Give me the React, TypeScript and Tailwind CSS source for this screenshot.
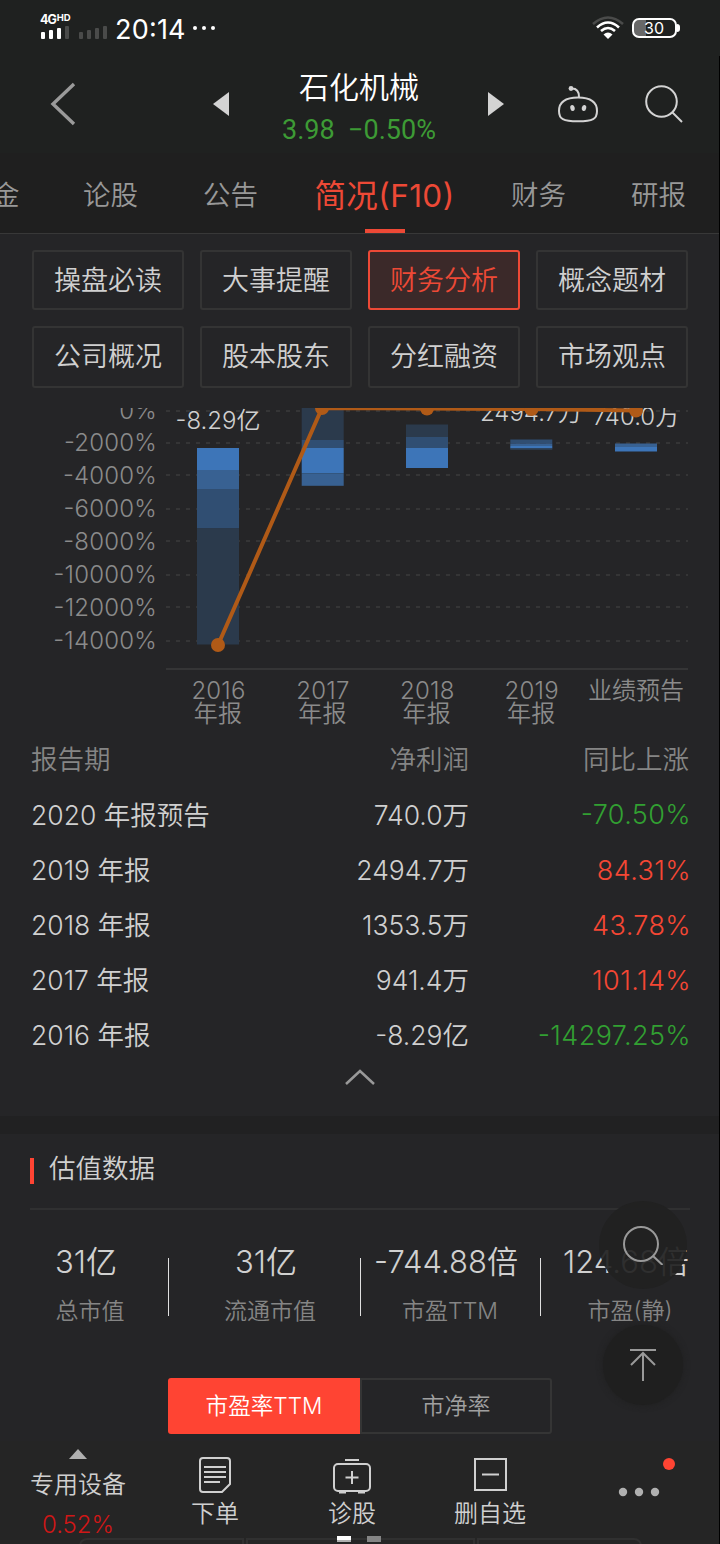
import { clsx } from "clsx"

interface Report {
    period: string
    profit: string
    change: string
}

const tabs = [
    { label: "论股", width: "w-[120px]" },
    { label: "公告", width: "w-[120px]" },
    { label: "简况(F10)", width: "w-[188px]", active: true },
    { label: "财务", width: "w-[120px]" },
    { label: "研报", width: "w-[120px]" },
]

const sections = ["操盘必读", "大事提醒", "财务分析", "概念题材", "公司概况", "股本股东", "分红融资", "市场观点"]

const reports: Report[] = [
    { period: "2020 年报预告", profit: "740.0万", change: "-70.50%" },
    { period: "2019 年报", profit: "2494.7万", change: "84.31%" },
    { period: "2018 年报", profit: "1353.5万", change: "43.78%" },
    { period: "2017 年报", profit: "941.4万", change: "101.14%" },
    { period: "2016 年报", profit: "-8.29亿", change: "-14297.25%" },
]

const stats = [
    { value: "31亿", label: "总市值", box: "w-[168px] pl-3" },
    { value: "31亿", label: "流通市值", box: "w-[192px] pl-3" },
    { value: "-744.88倍", label: "市盈TTM", box: "w-[180px]" },
    { value: "124.68倍", label: "市盈(静)", box: "w-[180px]" },
]

const gridLines = [
    { y: 411, label: "0%" },
    { y: 443, label: "-2000%" },
    { y: 475, label: "-4000%" },
    { y: 509, label: "-6000%" },
    { y: 541, label: "-8000%" },
    { y: 575, label: "-10000%" },
    { y: 607, label: "-12000%" },
    { y: 641, label: "-14000%" },
]

// [x, y, height, color], every bar is 42 wide
const bars: [number, number, number, string][] = [
    [197, 448, 22, "#3d75b8"],
    [197, 470, 19, "#386192"],
    [197, 489, 39.5, "#304e72"],
    [197, 528.5, 116, "#2b3a4c"],
    [301.7, 408, 32, "#2b3a4c"],
    [301.7, 440, 8, "#304e72"],
    [301.7, 448, 25.3, "#3d75b8"],
    [301.7, 473.3, 12.5, "#386192"],
    [406, 424.5, 12.5, "#2b3a4c"],
    [406, 437, 11, "#304e72"],
    [406, 448, 20, "#3d75b8"],
    [510.3, 439.5, 4, "#304e72"],
    [510.3, 443.5, 2.5, "#386192"],
    [510.3, 446, 2.5, "#3d75b8"],
    [510.3, 448.5, 1.5, "#2b3a4c"],
    [615, 443.5, 3.5, "#386192"],
    [615, 447, 4.5, "#3d75b8"],
]

const points = [
    [218, 645],
    [322, 408],
    [427, 408.5],
    [531.5, 409],
    [636, 410.5],
]

function StatusBar() {
    return (
        <div className="flex h-14 items-center pl-10">
            <div className="mt-[-2px] w-[31px]">
                <div className="flex h-[12px] items-start text-[12.5px] leading-[12px] font-bold tracking-[-1px] text-white">
                    4G<span className="ml-px text-[9.5px] leading-[8px] tracking-[-0.3px]">HD</span>
                </div>
                <svg className="mt-[-1px] block h-[15px] w-[31px]" viewBox="0 0 31 15">
                    <rect x="1" y="7" width="4" height="7" rx="1" fill="#fff" />
                    <rect x="9" y="5" width="4" height="9" rx="1" fill="#fff" />
                    <rect x="17" y="3" width="4" height="11" rx="1" fill="#fff" />
                    <rect x="25" y="1" width="4" height="13" rx="1" fill="#4a4b4a" />
                </svg>
            </div>
            <svg className="mt-[7px] ml-[7px] h-[15px] w-[31px]" viewBox="0 0 31 15">
                <rect x="1" y="8" width="4" height="7" rx="1" fill="#4a4b4a" />
                <rect x="9" y="6" width="4" height="9" rx="1" fill="#4a4b4a" />
                <rect x="17" y="4" width="4" height="11" rx="1" fill="#4a4b4a" />
                <rect x="25" y="2" width="4" height="13" rx="1" fill="#4a4b4a" />
            </svg>
            <span className="mt-1 ml-[6px] w-[70px] text-[27px] leading-8 font-normal tracking-[0.2px] whitespace-nowrap text-white">20:14</span>
            <svg className="ml-[6px] h-1 w-6" viewBox="0 0 24 4">
                <circle cx="4" cy="2" r="2" fill="#fff" />
                <circle cx="13" cy="2" r="2" fill="#fff" />
                <circle cx="22" cy="2" r="2" fill="#fff" />
            </svg>
            <svg className="ml-auto h-6 w-8" viewBox="0 0 32 24" fill="none" strokeWidth="2.6">
                <path d="M1 8Q16-5 31 8" stroke="#4a4b4a" />
                <path d="M5 11.500Q16 1.500 27 11.500" stroke="#fff" />
                <path d="M9 15Q16 9 23 15" stroke="#fff" />
                <path d="M11.500 18.500Q16 14.500 20.500 18.500L16 23Z" fill="#fff" />
            </svg>
            <div className="ml-2 flex h-5 w-[45px] items-center justify-center rounded-[7px] border-2 border-white bg-linear-to-r from-[#686868] from-30% to-transparent to-30% pr-px text-[16px] leading-4 font-normal text-white">
                30
            </div>
            <div className="mr-10 h-2 w-[3px] rounded-r bg-white" />
        </div>
    )
}

function Header() {
    return (
        <div className="flex h-[97px] items-center text-[#d3d3d3]">
            <svg className="mt-[-2px] ml-[50px] h-11 w-[26px] text-[#9a9a9a]" viewBox="0 0 26 44" fill="none" stroke="currentColor" strokeWidth="3.4">
                <path d="M24 2L3 22L24 42" />
            </svg>
            <svg className="mt-[-2px] ml-[137px] h-6 w-4" viewBox="0 0 16 24" fill="currentColor">
                <path d="M16 0V24L0 12Z" />
            </svg>
            <div className="ml-[53px] flex w-[154px] flex-col items-center pt-2">
                <div className="text-[30px] leading-[42px] text-white">石化机械</div>
                <div className="font-[Roboto] text-[27px] leading-[44px] font-normal whitespace-pre text-[#3d9b35]">3.98  −0.50%</div>
            </div>
            <svg className="mt-[-2px] ml-[52px] h-6 w-4" viewBox="0 0 16 24" fill="currentColor">
                <path d="M0 0V24L16 12Z" />
            </svg>
            <svg className="mt-[-2px] ml-[53px] h-10 w-[42px]" viewBox="0 0 42 40" fill="none" stroke="currentColor" strokeWidth="2">
                <path d="M15 4.500C20 4.500 22 7 22 13" />
                <circle cx="14" cy="4.500" r="2.400" fill="currentColor" stroke="none" />
                <path d="M21 13.500C32 13.500 40 17 40 27C40 35 36 37.300 21 37.300C6 37.300 2 35 2 27C2 17 10 13.500 21 13.500Z" />
                <ellipse cx="15.500" cy="24" rx="2.200" ry="3" fill="currentColor" stroke="none" transform="rotate(-12 15.500 24)" />
                <ellipse cx="27" cy="24" rx="2.200" ry="3" fill="currentColor" stroke="none" transform="rotate(12 27 24)" />
            </svg>
            <svg className="mt-[-2px] ml-[46px] h-[38px] w-[38px]" viewBox="0 0 38 38" fill="none" stroke="currentColor" strokeWidth="2">
                <circle cx="16.500" cy="16.500" r="15.300" />
                <path d="M27 27L37 37" />
            </svg>
        </div>
    )
}

function ProfitChart() {
    return (
        <svg className="mt-5 block h-[320px] w-[720px]" viewBox="0 408 720 320">
            <g stroke="#353536" strokeWidth="2">
                {gridLines.map(({ y }) => (
                    <line key={y} x1="166" x2="688" y1={y} y2={y} strokeDasharray="4 6" />
                ))}
                <line x1="166" x2="688" y1="669" y2="669" />
            </g>
            {bars.map(([x, y, height, fill]) => (
                <rect key={`${x}-${y}`} x={x} y={y} width="42" height={height} fill={fill} />
            ))}
            <g fill="#8b8b8b" fontSize="24" textAnchor="end" letterSpacing="0.2">
                {gridLines.map(({ y, label }, i) => (
                    <text key={y} x="157" y={418.500 + i * 32.900}>{label}</text>
                ))}
            </g>
            <g fill="#d0d0d0" fontSize="24" textAnchor="middle">
                <text x="218" y="429">-8.29亿</text>
                <text x="531" y="421">2494.7万</text>
                <text x="636" y="424.500">740.0万</text>
            </g>
            <polyline points={points.map((p) => p.join(",")).join(" ")} fill="none" stroke="#b05a17" strokeWidth="4" />
            {points.map(([x, y]) => (
                <circle key={x} cx={x} cy={y} r="7" fill="#b05a17" />
            ))}
            <g fill="#8b8b8b" fontSize="24" textAnchor="middle">
                {["2016", "2017", "2018", "2019"].map((year, i) => (
                    <text key={year} x={218.500 + i * 104.400} y="699" letterSpacing="0.2">
                        {year}
                        <tspan x={218 + i * 104.400} y="722">年报</tspan>
                    </text>
                ))}
                <text x="636" y="699">业绩预告</text>
            </g>
        </svg>
    )
}

function ReportTable() {
    return (
        <div className="pr-[31px] pl-[31px] text-[26.5px]">
            <div className="flex h-[60px] items-center pt-1 text-[26.5px] text-[#858585]">
                <span className="w-[200px]">报告期</span>
                <span className="w-[238px] text-right">净利润</span>
                <span className="flex-1 text-right">同比上涨</span>
            </div>
            {reports.map(({ period, profit, change }) => (
                <div key={period} className="flex h-[55.2px] items-center text-[#d0d0d0]">
                    <span className="w-[200px]">{period}</span>
                    <span className="w-[238px] text-right">{profit}</span>
                    <span
                        className={clsx(
                            "mr-[-2px] flex-1 text-right text-[27px] tracking-[0.4px]",
                            change.startsWith("-") ? "text-[#32a032]" : "text-[#f54734]"
                        )}
                    >
                        {change}
                    </span>
                </div>
            ))}
        </div>
    )
}

function BottomBar() {
    return (
        <div className="relative flex h-[103px] overflow-hidden bg-[#252525] text-[24px] leading-8 text-[#d0d0d0]">
            <div className="flex w-[156px] flex-col items-center">
                <svg className="mt-2 h-[10px] w-[18px]" viewBox="0 0 18 10" fill="#b0b0b0">
                    <path d="M0 10L9 0L18 10Z" />
                </svg>
                <span className="mt-[10px]">专用设备</span>
                <span className="mt-2 text-[#cf1717]">0.52%</span>
            </div>
            <div className="flex w-[118px] flex-col items-center">
                <svg className="mt-[15px] h-[38px] w-[34px]" viewBox="0 0 34 38" fill="none" stroke="currentColor" strokeWidth="2">
                    <path d="M5 2H29Q32 2 32 5V28L24 36H5Q2 36 2 33V5Q2 2 5 2Z" />
                    <path d="M6 11H28M6 16H28M6 21H28M6 26H22" />
                </svg>
                <span className="mt-1">下单</span>
            </div>
            <div className="flex w-[156px] flex-col items-center">
                <svg className="mt-[15px] h-[38px] w-10" viewBox="0 0 40 38" fill="none" stroke="currentColor" strokeWidth="2">
                    <rect x="2" y="8" width="36" height="27" rx="4" />
                    <path d="M13 4H27M20 15V28M13.500 21.500H26.500" />
                    <path d="M7 36.500H14M26 36.500H33" />
                </svg>
                <span className="mt-1">诊股</span>
            </div>
            <div className="flex w-[120px] flex-col items-center">
                <svg className="mt-[14px] h-[38px] w-9" viewBox="0 0 36 38" fill="none" stroke="currentColor" strokeWidth="2">
                    <rect x="3" y="4" width="31" height="31" />
                    <path d="M10 19.500H27" />
                </svg>
                <span className="mt-[5px]">删自选</span>
            </div>
            <svg className="mt-[14px] ml-[64px] h-[46px] w-[64px]" viewBox="0 0 64 46" fill="#b0b0b0">
                <circle cx="9" cy="37" r="4.200" />
                <circle cx="25" cy="37" r="4.200" />
                <circle cx="41" cy="37" r="4.200" />
                <circle cx="55" cy="9" r="6" fill="#ff4433" />
            </svg>
            {/* Top edge of the cards that peek out under the bar */}
            <div className="absolute top-[97px] left-[79px] flex h-4 gap-[2px]">
                <div className="w-[165px] rounded-tl-lg border-2 border-[#303030]" />
                <div className="w-[229px] border-2 border-[#303030]" />
                <div className="w-[165px] rounded-tr-lg border-2 border-[#303030]" />
            </div>
            <div className="absolute top-[95px] left-[337px] flex gap-4">
                <div className="h-[6px] w-[14px] border-b-2 border-[#b0b0b0] bg-white" />
                <div className="h-[6px] w-[14px] bg-[#858585]" />
            </div>
        </div>
    )
}

export default function App() {
    return (
        <div className="relative h-[1544px] w-[720px] overflow-hidden bg-[#252527] font-['Inter','Noto_Sans_CJK_SC',sans-serif] font-[350] [font-feature-settings:'case']">
            <div className="bg-[#1f2120]">
                <StatusBar />
                <Header />
            </div>

            <div className="flex h-[81px] items-center overflow-hidden border-b border-[#383838] bg-[#1f1f1f] text-[27.5px] text-[#989898]">
                <div className="w-[50px] shrink-0 pt-[6px]">
                    <span className="ml-[-8px]">金</span>
                </div>
                {tabs.map(({ label, width, active }) => (
                    <div
                        key={label}
                        className={clsx(
                            "relative flex h-20 shrink-0 items-center justify-center pt-[6px] pl-px",
                            width,
                            active && "text-[31.5px] font-normal tracking-[0.4px] text-[#ed4936]"
                        )}
                    >
                        {label}
                        {active && <div className="absolute bottom-0 left-[75px] h-1 w-10 bg-[#ed4936]" />}
                    </div>
                ))}
            </div>

            <div className="grid grid-cols-4 gap-4 px-8 pt-4">
                {sections.map((name, i) => (
                    <div
                        key={name}
                        className={clsx(
                            "flex items-center justify-center rounded-[3px] border-2 text-[27px] leading-8",
                            i < 4 ? "h-[60px] pt-[2px]" : "h-[62px]",
                            name === "财务分析"
                                ? "border-[#ed4936] bg-[#3b2929] text-[#ed4936]"
                                : "border-[#343434] text-[#d0d0d0]"
                        )}
                    >
                        {name}
                    </div>
                ))}
            </div>

            <ProfitChart />
            <ReportTable />

            <div className="flex h-[52px] justify-center pt-[5px]">
                <svg className="h-4 w-[30px]" viewBox="0 0 30 16" fill="none" stroke="#999" strokeWidth="2.500">
                    <path d="M1 15L15 2L29 15" />
                </svg>
            </div>
            <div className="h-[18px] bg-[#212122]" />

            <div className="mx-[30px] flex h-[76px] border-b-2 border-[#303031]">
                <div className="mt-6 h-[26px] w-1 bg-[#ff4433]" />
                <div className="ml-[15px] text-[26.5px] leading-[68px] text-[#d0d0d0]">估值数据</div>
            </div>

            <div className="flex h-[168px]">
                {stats.map(({ value, label, box }, i) => (
                    <div key={label} className={clsx("relative flex flex-col items-center", box)}>
                        {i > 0 && <div className="absolute top-12 left-0 h-[58px] w-px bg-[#e0e0e0]" />}
                        <span className="mt-[29px] mr-2 text-[31px] leading-[46px] whitespace-nowrap text-[#d0d0d0]">{value}</span>
                        <span className="mt-2 text-[23px] leading-9 text-[#858585]">{label}</span>
                    </div>
                ))}
            </div>

            <div className="mx-[168px] flex h-[63px] text-[23px]">
                <div className="flex h-14 w-48 items-center justify-center rounded-l-[3px] bg-[#ff4433] pt-px text-[22.6px] text-white">市盈率TTM</div>
                <div className="flex h-14 w-48 items-center justify-center rounded-r-[3px] border-2 border-[#353535] pt-px text-[#a0a0a0]">市净率</div>
            </div>

            <BottomBar />

            {/* Floating buttons */}
            <div className="absolute top-[1201px] left-[599px] flex size-[88px] items-center justify-center rounded-full bg-[#212121]/92">
                <svg className="size-10" viewBox="0 0 40 40" fill="none" stroke="#999" strokeWidth="2">
                    <circle cx="18" cy="19" r="17" />
                    <path d="M30 31L39.500 40" />
                </svg>
            </div>
            <div className="absolute top-[1325px] left-[603px] flex size-[80px] items-center justify-center rounded-full bg-[#1f1f1f] shadow-[0_0_6px_#1f1f1f]">
                <svg className="size-8" viewBox="0 0 32 32" fill="none" stroke="#999" strokeWidth="2">
                    <path d="M3 1H29M16 4V32M4 16L16 4L28 16" />
                </svg>
            </div>
            <div className="absolute top-14 right-0 bottom-0 w-px bg-black" />
        </div>
    )
}
